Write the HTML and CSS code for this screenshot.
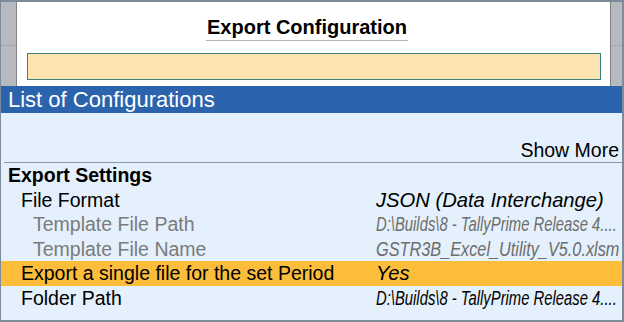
FILE: index.html
```html
<!DOCTYPE html>
<html>
<head>
<meta charset="utf-8">
<link rel="stylesheet" href="styles.css">
</head>
<body>
<div class="window">
  <div class="top">
    <div class="strip strip-left"><div class="strip-cap"></div></div>
    <div class="panel">
      <div class="title-wrap"><span class="title">Export Configuration</span></div>
      <div class="input"></div>
    </div>
    <div class="strip strip-right"><div class="strip-cap"></div></div>
  </div>
  <div class="bar">List of Configurations</div>
  <div class="content">
    <div class="show-more">Show More</div>
    <div class="row heading"><span class="label">Export Settings</span></div>
    <div class="row"><span class="label l1">File Format</span><span class="value big">JSON (Data Interchange)</span></div>
    <div class="row muted"><span class="label l2">Template File Path</span><span class="value"><span class="narrow n1">D:\Builds\8 - TallyPrime Release 4....</span></span></div>
    <div class="row muted"><span class="label l2">Template File Name</span><span class="value"><span class="narrow n2">GSTR3B_Excel_Utility_V5.0.xlsm</span></span></div>
    <div class="row active"><span class="label l1">Export a single file for the set Period</span><span class="value big">Yes</span></div>
    <div class="row"><span class="label l1">Folder Path</span><span class="value"><span class="narrow n1">D:\Builds\8 - TallyPrime Release 4....</span></span></div>
  </div>
</div>
</body>
</html>
```

FILE: styles.css
```css
* { box-sizing: border-box; }
html, body { margin: 0; padding: 0; }
body {
  font-family: "Liberation Sans", Arial, sans-serif;
  background: #e4f0fb;
}
.window {
  width: 624px;
  height: 322px;
  border-style: solid;
  border-color: #7d8c9b;
  border-width: 2px 2px 2px 1px;
  background: #e4f0fb;
  display: flex;
  flex-direction: column;
  overflow: hidden;
}
.top {
  display: flex;
  height: 84px;
  flex: 0 0 84px;
}
.strip {
  background: #b6babe;
}
.strip-left {
  width: 16px;
  border-right: 1px solid #7e8387;
}
.strip-right {
  width: 12px;
  border-left: 1px solid #7e8387;
}
.strip-cap {
  height: 44px;
  border-bottom: 1px solid #a3a8ac;
}
.panel {
  flex: 1;
  background: #ffffff;
  display: flex;
  flex-direction: column;
  padding: 13px 9px 0 10px;
}
.title-wrap {
  text-align: center;
  padding-right: 14px;
  height: 25px;
}
.title {
  display: inline-block;
  font-size: 20px;
  line-height: 24px;
  font-weight: bold;
  color: #000;
  border-bottom: 1px solid #b4b4b4;
  padding: 0 1px 1px;
}
.input {
  margin-top: 13px;
  height: 27px;
  background: #fde5b1;
  border: 1px solid #3f8080;
}
.bar {
  flex: 0 0 27px;
  height: 27px;
  background: #2b63ad;
  color: #fff;
  font-size: 22px;
  line-height: 27px;
  padding-left: 7px;
}
.content {
  flex: 1;
  padding-top: 25.5px;
  font-size: 19.5px;
  line-height: 24.5px;
  color: #000;
}
.show-more {
  text-align: right;
  padding-right: 3px;
  height: 24.5px;
  border-bottom: 1px solid #8a98a6;
  margin-left: 3px;
  line-height: 23.5px;
}
.row {
  display: flex;
  height: 24.5px;
  white-space: nowrap;
}
.label {
  flex: 0 0 375px;
  padding-left: 7px;
}
.heading .label { font-weight: bold; }
.label.l1 { padding-left: 20px; }
.label.l2 { padding-left: 32px; }
.value {
  flex: 1;
  font-style: italic;
  overflow: visible;
}
.value.big { font-size: 20.2px; }
.muted { color: #7b7b7b; }
.muted .value { color: #6d6d6d; }
.active { background: #fbbd3a; }
.narrow {
  display: inline-block;
  transform-origin: left center;
}
.n1 { transform: scaleX(0.76); }
.n2 { transform: scaleX(0.835); }
```
